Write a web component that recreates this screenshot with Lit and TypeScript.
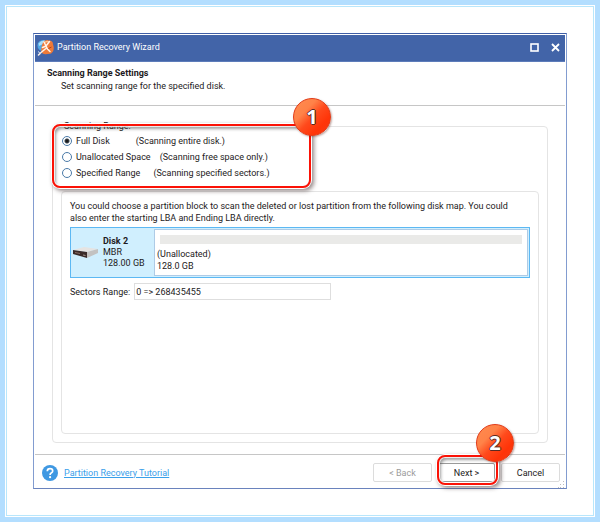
import { LitElement, html, css, svg } from "lit";
import { customElement, property, state } from "lit/decorators.js";

interface RangeOption {
  id: string;
  label: string;
  hint: string;
  gap: "wide" | "narrow" | "medium";
}

const OPTIONS: RangeOption[] = [
  { id: "full", label: "Full Disk", hint: "(Scanning entire disk.)", gap: "wide" },
  { id: "free", label: "Unallocated Space", hint: "(Scanning free space only.)", gap: "narrow" },
  { id: "range", label: "Specified Range", hint: "(Scanning specified sectors.)", gap: "medium" },
];

const wizardIcon = svg`
  <svg class="wizard-icon" viewBox="0 0 17 17" aria-hidden="true">
    <circle cx="6" cy="6.5" r="5.5" fill="#4fa9e6"/>
    <path d="M1.5 4.5 Q4 1 8 1.5 L6 5 L2 7 Z" fill="#a9dcf7"/>
    <path d="M6 3.5 Q9 0 12 1.5 Q16 1.5 16 5.5 Q17.5 9 16 12.5 Q14.5 15.5 10 15 Q6 16 4.5 13 Q3.5 9 6 3.5 Z" fill="#ef7a38"/>
    <path d="M7 4 Q9.5 1.5 12 3" fill="none" stroke="#ffc08a" stroke-width="1.5"/>
    <path d="M7 3 L9 7 M12.5 2.5 L9 7 L10.5 10 L13 12.5 M9 7 L5.5 8.5 M9.5 9 L4 13.5 L1.5 16" fill="none" stroke="#fff3e8" stroke-width="1.5" stroke-linecap="round"/>
    <path d="M1 12.5 L4 15" stroke="#d9e4f2" stroke-width="1"/>
    <path d="M11.5 9.5 L14.5 8" stroke="#b94418" stroke-width="1"/>
  </svg>`;

const driveIcon = svg`
  <svg class="drive-icon" viewBox="0 0 25 11" aria-hidden="true">
    <path d="M0 3 L11 0 L25 2 L14 5 Z" fill="#e6e4e2"/>
    <path d="M14 5 L25 2 L25 6 L14 11 Z" fill="#c3c2c1"/>
    <path d="M0 3 L14 5 L14 11 L0 7 Z" fill="#3b2b29"/>
    <path d="M2 5.5 L7 6.5" stroke="#8a6b62" stroke-width="1"/>
    <path d="M10 8 L12.5 8.5" stroke="#a3938d" stroke-width="1"/>
  </svg>`;

@customElement("step-callout")
export class StepCallout extends LitElement {
  @property() number = "";

  static styles = css`
    :host {
      display: block;
      position: absolute;
      box-sizing: border-box;
      border: 2px solid #fb1206;
      border-radius: 8px;
      pointer-events: none;
      box-shadow:
        0 0 0 1px #ffffff,
        2px 2px 4px 1px rgba(60, 40, 40, 0.55),
        inset 0 0 0 1px rgba(255, 255, 255, 0.8),
        inset 2px 3px 3px rgba(70, 70, 70, 0.5);
    }
    .badge {
      position: absolute;
      top: var(--badge-top);
      right: var(--badge-right);
      width: 38px;
      height: 38px;
      border-radius: 50%;
      box-sizing: border-box;
      border: 1px solid #e23a16;
      background: linear-gradient(135deg, #ff8c50 0%, #ff8248 32%, #ff4a1c 52%, #ff3408 75%, #f43a14 100%);
      box-shadow: 1px 1px 2px rgba(90, 30, 20, 0.4);
      display: grid;
      place-items: center;
      color: #ffffff;
      font: bold 20px/24px "Noto Sans", sans-serif;
      text-shadow:
        1px 0 0 #5a2a22,
        -1px 0 0 #5a2a22,
        0 1px 0 #5a2a22,
        0 -1px 0 #5a2a22;
    }
  `;

  render() {
    return html`<span class="badge">${this.number}</span>`;
  }
}

@customElement("app-root")
export class AppRoot extends LitElement {
  @state() private selected = "full";

  static styles = css`
    :host {
      display: block;
      font: 9px/12px Roboto, "Open Sans", sans-serif;
      color: #1d1a22;
    }
    * {
      box-sizing: border-box;
    }
    button,
    input {
      font: inherit;
      color: inherit;
      margin: 0;
    }
    .frame {
      min-height: 100vh;
      display: flex;
      border: 5px solid #b3deff;
      padding: 1px;
      background: #ffffff;
    }
    .sheet {
      flex: 1;
      min-width: 0;
      display: flex;
      border: 1px solid #b8e6fb;
      padding: 26px;
    }
    .window {
      flex: 1;
      min-width: 0;
      display: flex;
      flex-direction: column;
      border: 1px solid #829cd0;
      border-top-color: #3f5ea6;
      border-bottom-color: #6a83bd;
      padding: 1px 1px 0;
    }
    .titlebar {
      display: flex;
      align-items: center;
      height: 27px;
      padding: 0 5px 2px 2px;
      gap: 3px;
      background: #4264a8;
      border-bottom: 1px solid #5d7cba;
      color: #ffffff;
    }
    .wizard-icon {
      width: 17px;
      height: 17px;
    }
    .caption {
      flex: 1;
      margin: 0;
      font-size: 9px;
      font-weight: 400;
    }
    .controls {
      display: flex;
      gap: 12px;
    }
    .control {
      display: block;
      padding: 0;
      border: 0;
      background: none;
      width: 9px;
      height: 9px;
    }
    .control svg {
      display: block;
      width: 9px;
      height: 9px;
    }
    .intro {
      padding: 5px 12px 12px;
      border-bottom: 1px solid #c6c6c6;
      line-height: 13px;
    }
    .intro h2 {
      margin: 0;
      font-size: 9px;
      font-weight: 700;
    }
    .intro p {
      margin: 0;
      padding-left: 14px;
    }
    .content {
      flex: 1;
      display: flex;
      padding: 14px 17px 11px;
    }
    .group {
      flex: 1;
      min-width: 0;
      display: flex;
      flex-direction: column;
      margin: 0;
      padding: 1px 8px 8px;
      border: 1px solid #e4e4e4;
      border-radius: 4px;
    }
    .group legend {
      margin-left: 1px;
      padding: 0 2px;
    }
    .choices {
      position: relative;
      display: flex;
      flex-direction: column;
      padding-left: 1px;
    }
    .choices step-callout {
      top: -9px;
      left: -9px;
      width: 259px;
      height: 64px;
      --badge-top: -28px;
      --badge-right: -22px;
    }
    .choice {
      display: flex;
      align-items: center;
      height: 16px;
    }
    .choice input {
      appearance: none;
      width: 10px;
      height: 10px;
      margin-right: 4px;
      border: 1px solid #4a7aa8;
      border-radius: 50%;
      background: #ffffff;
    }
    .choice input:checked {
      background: radial-gradient(circle, #1b1b1b 0 1px, #3c4650 2px, #ffffff 3px);
    }
    .wide {
      padding-left: 26px;
    }
    .narrow {
      padding-left: 9px;
    }
    .medium {
      padding-left: 13px;
    }
    .map {
      flex: 1;
      margin-top: 10px;
      padding: 8px;
      border: 1px solid #e4e4e4;
      border-radius: 4px;
    }
    .map p {
      margin: 0;
    }
    .disk {
      display: flex;
      height: 51px;
      margin-top: 3px;
      padding: 1px;
      border: 1px solid #5cb8f3;
      background: #d0effe;
    }
    .disk-info {
      display: flex;
      align-items: center;
      width: 82px;
      padding-left: 1px;
      gap: 5px;
      line-height: 11px;
    }
    .drive-icon {
      width: 25px;
      height: 11px;
    }
    .disk-name {
      display: block;
    }
    .partition {
      flex: 1;
      padding: 5px 2px;
      border: 1px solid #aecbe6;
      background: #ffffff;
    }
    .bar {
      height: 9px;
      margin: 0 3px 4px;
      background: #eaeae8;
    }
    .line {
      display: block;
    }
    .sectors {
      display: flex;
      align-items: center;
      gap: 4px;
      margin-top: 5px;
    }
    .sectors input {
      width: 197px;
      height: 17px;
      padding: 0 1px;
      border: 1px solid #dedede;
      background: #ffffff;
    }
    .footer {
      position: relative;
      display: flex;
      align-items: center;
      height: 34px;
      padding: 2px 5px 0 7px;
      gap: 6px;
      border-top: 1px solid #c6c6c6;
    }
    .help-icon {
      width: 16px;
      height: 16px;
    }
    .footer a {
      color: #3aa0ea;
      margin-right: auto;
      text-decoration: underline;
    }
    .action {
      position: relative;
      display: flex;
    }
    .action step-callout {
      inset: -8px -3px -3px -1px;
      --badge-top: -33px;
      --badge-right: -18px;
    }
    .button {
      width: 59px;
      height: 19px;
      padding: 0;
      border: 1px solid #dcdcdc;
      border-radius: 2px;
      background: #ffffff;
    }
    .primary {
      width: 57px;
      border-color: #9a9a9a;
    }
    .button:disabled {
      color: #9b9b9b;
    }
    .grip {
      position: absolute;
      right: 0;
      bottom: 0;
      width: 7px;
      height: 7px;
    }
  `;

  private renderChoice(option: RangeOption) {
    return html`
      <label class="choice">
        <input
          type="radio"
          name="range"
          .checked=${this.selected === option.id}
          @change=${() => (this.selected = option.id)}
        />
        <span>${option.label}</span>
        <span class=${option.gap}>${option.hint}</span>
      </label>
    `;
  }

  render() {
    return html`
      <div class="frame">
        <div class="sheet">
          <main class="window">
            <header class="titlebar">
              ${wizardIcon}
              <h1 class="caption">Partition Recovery Wizard</h1>
              <div class="controls">
                <button class="control" aria-label="Maximize">
                  <svg viewBox="0 0 9 9"><rect x="1" y="1" width="7" height="7" fill="none" stroke="#fff" stroke-width="1.6"/></svg>
                </button>
                <button class="control" aria-label="Close">
                  <svg viewBox="0 0 9 9"><path d="M1 1 L8 8 M8 1 L1 8" stroke="#fff" stroke-width="1.8"/></svg>
                </button>
              </div>
            </header>
            <section class="intro">
              <h2>Scanning Range Settings</h2>
              <p>Set scanning range for the specified disk.</p>
            </section>
            <section class="content">
              <fieldset class="group">
                <legend>Scanning Range:</legend>
                <div class="choices">
                  ${OPTIONS.map((option) => this.renderChoice(option))}
                  <step-callout number="1"></step-callout>
                </div>
                <div class="map">
                  <p>
                    You could choose a partition block to scan the deleted or lost partition from the
                    following disk map. You could<br />also enter the starting LBA and Ending LBA
                    directly.
                  </p>
                  <div class="disk">
                    <div class="disk-info">
                      ${driveIcon}
                      <div>
                        <strong class="disk-name">Disk 2</strong>
                        <span class="line">MBR</span>
                        <span class="line">128.00 GB</span>
                      </div>
                    </div>
                    <div class="partition">
                      <div class="bar"></div>
                      <span class="line">(Unallocated)</span>
                      <span class="line">128.0 GB</span>
                    </div>
                  </div>
                  <div class="sectors">
                    <label for="sectors">Sectors Range:</label>
                    <input id="sectors" type="text" value="0 =&gt; 268435455" />
                  </div>
                </div>
              </fieldset>
            </section>
            <footer class="footer">
              <svg class="help-icon" viewBox="0 0 16 16" aria-hidden="true">
                <circle cx="8" cy="8" r="8" fill="#3f98e2" />
                <path d="M5.3 6.2 Q5.3 3.6 8 3.6 Q10.7 3.6 10.7 5.9 Q10.7 7.2 9.2 8 Q8.1 8.6 8.1 10" fill="none" stroke="#fff" stroke-width="1.7" />
                <circle cx="8.1" cy="12.2" r="1.1" fill="#fff" />
              </svg>
              <a href="#tutorial">Partition Recovery Tutorial</a>
              <button class="button" disabled>&lt; Back</button>
              <span class="action">
                <button class="button primary">Next &gt;</button>
                <step-callout number="2"></step-callout>
              </span>
              <button class="button">Cancel</button>
              <svg class="grip" viewBox="0 0 7 7" aria-hidden="true">
                <path d="M5 0h1v1h-1z M5 3h1v1h-1z M2 3h1v1h-1z M5 6h1v1h-1z M2 6h1v1h-1z M0 6h1v1h-1z" fill="#bdbdbd" />
              </svg>
            </footer>
          </main>
        </div>
      </div>
    `;
  }
}
